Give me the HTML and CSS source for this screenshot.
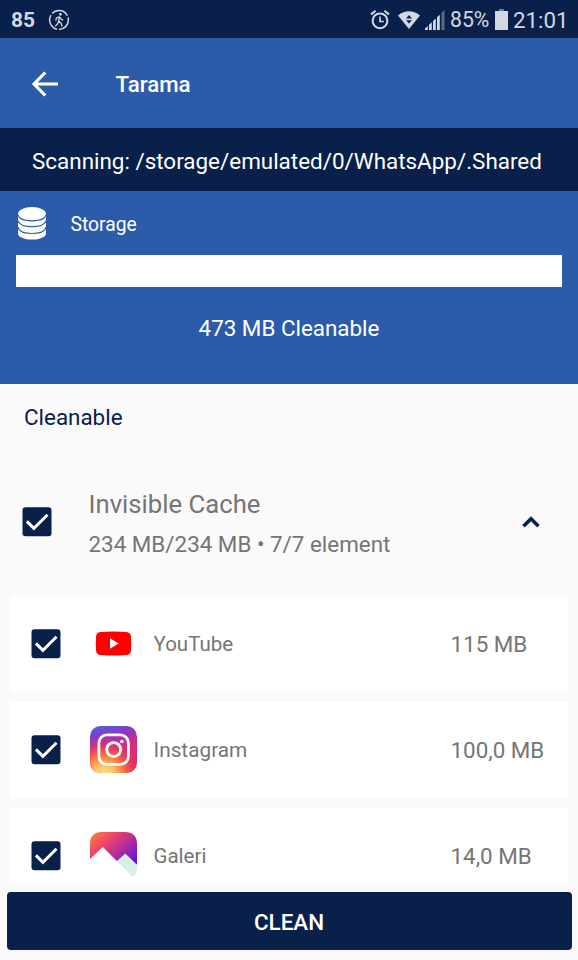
FILE: index.html
```html
<!DOCTYPE html>
<html lang="tr">
<head>
<meta charset="utf-8">
<title>Tarama</title>
<link rel="stylesheet" href="styles.css">
</head>
<body>
<svg class="defs" width="0" height="0" aria-hidden="true">
  <symbol id="check" viewBox="0 0 30 30">
    <rect x=".5" y=".2" width="29" height="29" rx="3" fill="#09214a"/>
    <path d="M4.900 14.400l7 6.900L25.500 7.800" fill="none" stroke="#fff" stroke-width="3"/>
  </symbol>
</svg>
<div class="screen">
  <header class="status">
    <span class="status-temp">85</span>
    <svg class="walk" viewBox="0 0 22 22">
      <circle cx="11" cy="11" r="9.4" fill="none" stroke="currentColor" stroke-width="1.500" stroke-dasharray="17.7 2" stroke-dashoffset="3"/>
      <circle cx="12.4" cy="5.3" r="1.4" fill="currentColor"/>
      <path d="M11.6 7.4L10.6 12l2.6 2.3.9 3.2M10.7 12.2l-1 2.6-2.6 2.6M11.3 7.8L8.4 9l-.6 2.6M12 8.3l1.3 2 1.9.8" fill="none" stroke="currentColor" stroke-width="1.3"/>
    </svg>
    <div class="status-right">
      <svg class="alarm" viewBox="0 0 20 21">
        <circle cx="10" cy="11.8" r="7.4" fill="none" stroke="currentColor" stroke-width="2"/>
        <path d="M10 7.5v5h3.8" fill="none" stroke="currentColor" stroke-width="1.6"/>
        <path d="M1 5.4L5.6 1.7M19 5.4l-4.6-3.7" fill="none" stroke="currentColor" stroke-width="2"/>
      </svg>
      <svg class="wifi" viewBox="0 0 22 18">
        <path d="M0 4.4Q11-4 22 4.4L11 18z" fill="currentColor"/>
        <path d="M8 7.4l3-3.4 3 3.4zM8 9.2h6l-3 3.4z" fill="#09214a"/>
      </svg>
      <svg class="signal" viewBox="0 0 20 20">
        <path d="M0 20v-1.500L2.800 16v4zM4 20v-5.200l2.800-2.500V20zM8 20v-9l2.800-2.500V20zM12 20V7.200l2.800-2.500V20z" fill="currentColor"/>
        <path d="M16.500 20V2.800L19.500 0v20z" fill="currentColor" opacity=".4"/>
      </svg>
      <span class="percent">85%</span>
      <svg class="battery" viewBox="0 0 13 21">
        <path d="M4 0h5v2H4z" fill="currentColor" opacity=".5"/>
        <path d="M0 2h13v19H0z" fill="currentColor"/>
      </svg>
      <span class="clock">21:01</span>
    </div>
  </header>

  <div class="appbar">
    <svg class="back" viewBox="0 0 26 26"><path d="M13.300 1.500L2 13l11.300 11.500M2 13h24" fill="none" stroke="#fff" stroke-width="3.200"/></svg>
    <h1>Tarama</h1>
  </div>

  <div class="scan"><span>Scanning: /storage/emulated/0/WhatsApp/.Shared</span></div>

  <section class="storage">
    <div class="storage-head">
      <svg class="db" viewBox="0 0 28 33">
        <path d="M0 6.500v20C0 30 6 32.600 14 32.600S28 30 28 26.500v-20z" fill="#fff"/>
        <path d="M0 7.500c1 4 6.500 6.300 14 6.300s13-2.300 14-6.300M0 13.700c1 4 6.500 6 14 6s13-2 14-6M0 20.200c1 4 6.500 6.300 14 6.300s13-2.300 14-6.300" fill="none" stroke="#2c5ba9" stroke-width="1.200"/>
        <ellipse cx="14" cy="6.600" rx="13.800" ry="6.500" fill="#fff"/>
      </svg>
      <span>Storage</span>
    </div>
    <div class="bar"></div>
    <p>473 MB Cleanable</p>
  </section>

  <main class="content">
    <h2>Cleanable</h2>
    <div class="group">
      <svg class="box"><use href="#check"/></svg>
      <div class="group-text">
        <div class="group-title">Invisible Cache</div>
        <div class="group-sub">234 MB/234 MB • 7/7 element</div>
      </div>
      <svg class="chevron" viewBox="0 0 18 12"><path d="M1.500 10.300L9 2.800l7.500 7.500" fill="none" stroke="#09214a" stroke-width="3.500"/></svg>
    </div>
    <div class="list">
      <div class="card">
        <svg class="box"><use href="#check"/></svg>
        <svg class="app" viewBox="0 0 47 47">
          <path d="M10.500 11.900Q23.500 10.900 36.500 11.900Q40.400 12.300 40.900 16Q41.500 23.500 40.900 31Q40.400 34.700 36.500 35.100Q23.500 36.100 10.500 35.100Q6.600 34.700 6.100 31Q5.500 23.500 6.100 16Q6.600 12.300 10.500 11.900z" fill="#f00"/>
          <path d="M20 18.200v10.600l8.700-5.300z" fill="#fff"/>
        </svg>
        <span class="name">YouTube</span><span class="size">115 MB</span>
      </div>
      <div class="card">
        <svg class="box"><use href="#check"/></svg>
        <svg class="app" viewBox="0 0 47 47">
          <defs>
            <linearGradient id="ig" x1="0" y1="0" x2=".25" y2="1"><stop offset="0" stop-color="#3c6ce0"/><stop offset=".26" stop-color="#8a38c4"/><stop offset=".58" stop-color="#d62b80"/><stop offset="1" stop-color="#e52e62"/></linearGradient>
            <radialGradient id="ig2" cx=".3" cy="1.050" r=".85"><stop offset="0" stop-color="#ffdc80"/><stop offset=".25" stop-color="#fdc468"/><stop offset=".52" stop-color="#f9703a"/><stop offset=".75" stop-color="#e83a5a" stop-opacity=".6"/><stop offset="1" stop-color="#d62b80" stop-opacity="0"/></radialGradient>
          </defs>
          <rect width="47" height="47" rx="10.500" fill="url(#ig)"/>
          <rect width="47" height="47" rx="10.500" fill="url(#ig2)"/>
          <rect x="8.900" y="8.900" width="29.500" height="29.500" rx="8" fill="none" stroke="#fff" stroke-width="2.800"/>
          <circle cx="23.700" cy="23.600" r="7" fill="none" stroke="#fff" stroke-width="2.900"/>
          <circle cx="31.900" cy="15.500" r="1.800" fill="#fff"/>
        </svg>
        <span class="name wide">Instagram</span><span class="size">100,0 MB</span>
      </div>
      <div class="card last">
        <svg class="box"><use href="#check"/></svg>
        <svg class="app" viewBox="0 0 47 47">
          <defs><linearGradient id="ga" x1="0" y1=".1" x2="1" y2=".85"><stop offset="0" stop-color="#ff793f"/><stop offset=".35" stop-color="#e8416d"/><stop offset=".65" stop-color="#b02c9b"/><stop offset="1" stop-color="#6114df"/></linearGradient></defs>
          <path d="M0 27V12Q0 0 12 0h23q12 0 12 12v21L35.300 21.700 27 29.300 12.800 15z" fill="url(#ga)"/>
          <path d="M27 29.300l8.300-7.600L47 33v5q0 5-4.500 6.800z" fill="#d9f0e9"/>
        </svg>
        <span class="name">Galeri</span><span class="size">14,0 MB</span>
      </div>
    </div>
  </main>
  <button class="clean">CLEAN</button>
</div>
</body>
</html>
```

FILE: styles.css
```css
* { box-sizing: border-box; }
body { margin: 0; font-family: Roboto, "Liberation Sans", sans-serif; background: #fafafa; }
h1, h2, p { margin: 0; font-weight: 400; }
svg { display: block; flex: none; }
.defs { position: absolute; }
.screen { width: 578px; height: 960px; display: flex; flex-direction: column; overflow: hidden; white-space: nowrap; }

.status { height: 38px; flex: none; background: #09214a; color: #d3d8e0; display: flex; align-items: center; padding: 1px 11px 0 11px; }
.status-temp { font-size: 21px; font-weight: 700; width: 37px; }
.walk { width: 22px; height: 22px; }
.status-right { margin-left: auto; display: flex; align-items: center; }
.alarm { width: 20px; height: 21px; margin-right: 8px; }
.wifi { width: 22px; height: 18px; margin-right: 5px; }
.signal { width: 20px; height: 20px; margin-right: 5px; }
.percent { font-size: 21.2px; width: 45px; }
.battery { width: 13px; height: 21px; margin-right: 5px; }
.clock { font-size: 22.3px; width: 54px; }

.appbar { height: 90px; flex: none; background: #2c5ba9; display: flex; align-items: center; padding: 1px 0 0 32px; color: #fff; }
.back { width: 26px; height: 26px; margin-right: 57.5px; }
.appbar h1 { font-size: 22.3px; font-weight: 500; padding-top: 1px; }

.scan { height: 63px; flex: none; background: #09214a; color: #fff; display: flex; align-items: center; padding: 2px 0 0 32px; font-size: 22.43px; }

.storage { height: 193px; flex: none; background: #2c5ba9; color: #fff; padding: 15px 16px 0; }
.storage-head { display: flex; align-items: center; height: 34px; padding-left: 2px; font-size: 19.3px; }
.storage-head span { padding-top: 2px; }
.db { width: 28px; height: 33px; margin-right: 24.5px; }
.bar { height: 32px; margin-top: 15px; background: #fff; }
.storage p { text-align: center; font-size: 22.4px; line-height: 30px; margin-top: 26px; }

.content { height: 499px; flex: none; }
.content h2 { padding: 18px 0 0 24px; font-size: 22.4px; line-height: 30px; color: #09214a; }
.group { height: 164px; display: flex; align-items: center; padding: 15px 38px 0 22px; color: #757575; }
.box { width: 30px; height: 30px; }
.group-text { margin-left: 36.5px; padding-top: 4px; }
.group-title { font-size: 25.7px; line-height: 40px; }
.group-sub { font-size: 22.4px; line-height: 40px; }
.chevron { width: 18px; height: 12px; margin-left: auto; }
.list { display: flex; flex-direction: column; gap: 10px; padding: 0 10px; }
.card { height: 96px; background: #fff; display: flex; align-items: center; padding-left: 21px; color: #757575; }
.card.last { height: 75px; padding-top: 21px; }
.app { width: 47px; height: 47px; margin: -1px 0 0 28.5px; }
.name { width: 314px; padding: 0 0 0 17px; font-size: 20.5px; }
.name.wide { font-size: 20.8px; }
.size { font-size: 22.4px; }

.clean { height: 58px; flex: none; margin: 9px 6.5px 0; border: 0; border-radius: 4px; background: #09214a; color: #fff; font: 500 22.4px Roboto, "Liberation Sans", sans-serif; padding: 2px 0 0; }
```
